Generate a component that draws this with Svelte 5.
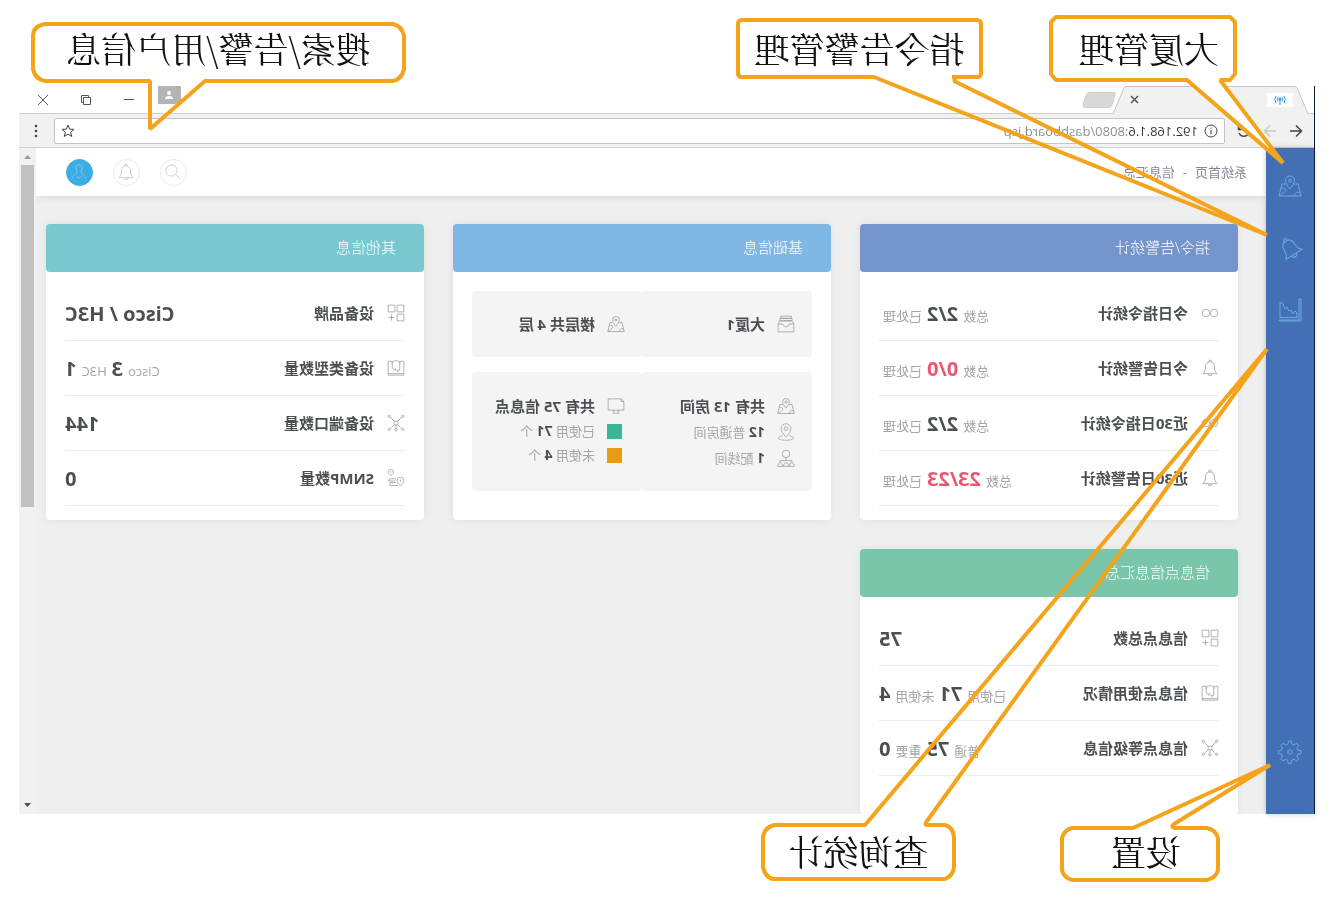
<script>
  const icons = {
    map: 'M12 15c-3.2-4-4.5-6.200-4.500-8.500a4.500 4.500 0 0 1 9 0C16.500 8.800 15.200 11 12 15zM12 5.200a1.400 1.400 0 1 0 0 2.800a1.400 1.400 0 1 0 0-2.800M7.500 10H4L1 22h22l-3-12h-3.500M1.800 19c3-1.500 5-1 6 3M21 14c-4-.5-6 1.500-4 3.500s4 2 4.500 4.500',
    bell: 'M2.500 19.500C5 17.500 6 15 6 10.500 6 6 8.500 4 12 4s6 2 6 6.500c0 4.500 1 7 3.500 9zM10.300 4V3a1.700 1.700 0 0 1 3.400 0v1M9.500 19.800a2.500 2.500 0 0 0 5 0',
    chart: 'M1 1h2v21h20v1H1zM5 20v-5l2-2 2 3 2-4 2 1 2-4 2 2 2-5 3-2v16M5 19.500h17',
    gear: 'M10.500 1h3l.5 3 2.500 1 2.500-1.800 2.100 2.100L19.500 8l1 2.300 3 .4v3l-3 .4-1 2.400 1.700 2.400-2.100 2.100-2.500-1.700-2.400 1-.4 3h-3l-.5-3-2.400-1L5.400 21l-2.200-2.100L5 16.500l-1-2.400-3-.4v-3l3-.4 1-2.400-1.700-2.500 2.100-2.100L7.900 5l2.300-1zM12 9.800a2.200 2.200 0 1 0 0 4.400a2.200 2.200 0 1 0 0-4.400',
    infinity: 'M6.500 7a5 5 0 1 0 0 10a5 5 0 1 0 0-10M17.500 7a5 5 0 1 0 0 10a5 5 0 1 0 0-10',
    grid: 'M1.500 1.500h9v9h-9zM13.500 1.500h9v9h-9zM1.500 13.500h9v9h-9zM18 14v8M14 18h8',
    device: 'M7 3H1.500v18.500h21V3H17M6.500 6c0-5 11-5 11 0M7 3v12h4l-2 3M17 3v9l-4 3v-3M1.500 19.500h21',
    network: 'M9.500 9.500h5v5h-5zM9.500 9.500L4 4M14.500 9.500L20 4M9.500 14.500l-5 5M14.500 14.500l5 5M12 14.500v5M3 1.500a1.500 1.500 0 1 0 0 3a1.500 1.500 0 1 0 0-3M21 1.500a1.500 1.500 0 1 0 0 3a1.500 1.500 0 1 0 0-3M3 19a1.500 1.500 0 1 0 0 3a1.500 1.500 0 1 0 0-3M21 19a1.500 1.500 0 1 0 0 3a1.500 1.500 0 1 0 0-3M12 19.500a1.500 1.500 0 1 0 0 3a1.500 1.500 0 1 0 0-3',
    route: 'M19 9c-2.500-2-3.500-3.500-3.500-5a3.500 3.500 0 0 1 7 0c0 1.500-1 3-3.500 5zM19 3v2M6 22c-3.500-2.500-4.500-4.500-4.500-6.500a4.500 4.500 0 0 1 9 0c0 2-1 4-4.500 6.500zM6 14v3M12 13h9l1 3h-9M12 18h8v4H9',
    archive: 'M5 1.500h14v3H5zM4 4.500h16v3H4zM3.500 8h17l2 4v10.500h-21V12zM1.500 12H8c.5 5 7.500 5 8 0h6.500',
    pin: 'M12 19c-4.500-5.500-6.500-8-6.500-11.500a6.500 6.500 0 0 1 13 0C18.500 11 16.500 13.500 12 19zM12 5a2.500 2.500 0 1 0 0 5a2.500 2.500 0 1 0 0-5M7.500 17C-2 19 1 23 12 23s14-4 4.500-6',
    people: 'M12 1.500a5 5 0 1 0 0 10a5 5 0 1 0 0-10M12 11.500v4M4 18v-2.500h16V18M1 23.500c0-7 6.500-7 6.500 0zM8.700 23.500c0-7 6.500-7 6.500 0zM16.500 23.500c0-7 6.500-7 6.500 0z',
    monitor: 'M5 2.500h17.500v15h-21V6zM1.500 6H5V2.500M9 17.500v3M15 17.500v3M7 21.500h10',
    search: 'M14 2.500a7.500 7.500 0 1 0 0 15a7.500 7.500 0 1 0 0-15M8.500 15.500L2.500 21.500',
    user: 'M12 2c-3 0-4 2-4 4.500 0 2 .5 3 1.500 4.500v2C8 15.500 3 16 2.500 21M12 2c3 0 4 2 4 4.500 0 2-.5 3-1.500 4.500v2c1.500 2.500 6.500 3 7 8M9 18l3 2 3-2'
  };

  const nav = [
    { icon: 'map', label: '大厦管理' },
    { icon: 'bell', label: '指令告警管理', tilt: true },
    { icon: 'chart', label: '查询统计' }
  ];

  const n = (v) => ({ v });
  const cards = [
    {
      title: '指令/告警统计', tone: 'indigo',
      rows: [
        { icon: 'infinity', label: '今日指令统计', parts: ['总数', n('2/2'), '已处理'] },
        { icon: 'bell', label: '今日告警统计', parts: ['总数', n('0/0'), '已处理'], alert: true },
        { icon: 'infinity', label: '近30日指令统计', parts: ['总数', n('2/2'), '已处理'] },
        { icon: 'bell', label: '近30日告警统计', parts: ['总数', n('23/23'), '已处理'], alert: true }
      ]
    },
    { title: '基础信息', tone: 'sky' },
    {
      title: '其他信息', tone: 'cyan',
      rows: [
        { icon: 'grid', label: '设备品牌', parts: [n('Cisco / H3C')] },
        { icon: 'device', label: '设备类型数量', parts: ['Cisco', n('3'), 'H3C', n('1')] },
        { icon: 'network', label: '设备端口数量', parts: [n('144')] },
        { icon: 'route', label: 'SNMP数量', parts: [n('0')] }
      ]
    },
    {
      title: '信息点信息汇总', tone: 'green',
      rows: [
        { icon: 'grid', label: '信息点总数', parts: [n('75')] },
        { icon: 'device', label: '信息点使用情况', parts: ['已使用', n('71'), '未使用', n('4')] },
        { icon: 'network', label: '信息点等级信息', parts: ['普通', n('75'), '重要', n('0')] }
      ]
    }
  ];

  const callouts = [
    { id: 'building', text: '大厦管理', solid: true,
      d: 'M7 2H181L186 7V59L181 65H50L-46 148L17 65H7L2 59V7Z' },
    { id: 'alarm', text: '指令告警管理',
      d: 'M6 2H241Q245 2 245 6V55Q245 59 241 59H109L-284 217L29 63Q26 59 31 59H6Q2 59 2 55V6Q2 2 6 2Z' },
    { id: 'search', text: '搜索/告警/用户信息',
      d: 'M13 2H361Q373 4 373 14V47Q371 57 361 59H256V107L201 59H13Q4 57 2 47V14Q4 4 13 2Z' },
    { id: 'query', text: '查询统计',
      d: 'M11 2H29Q32 2 29 -2L-311 -474L91 2H182Q192 5 193 14V44Q191 54 183 56H11Q3 53 2 44V14Q3 4 11 2Z' },
    { id: 'settings', text: '设置',
      d: 'M13 2H45Q50 1 46 -2L-50 -61L87 2H148Q156 4 158 12V44Q156 52 148 54H13Q4 52 2 44V12Q4 4 13 2Z' }
  ];
</script>

{#snippet icon(name, size = 18)}
  <svg class="icon" width={size} height={size} viewBox="0 0 24 24" aria-hidden="true"><path d={icons[name]} /></svg>
{/snippet}

<div class="page">
  <div class="browser">
    <div class="tabs">
      <div class="tab">
        <svg class="tab-shape" width="196" height="28" viewBox="0 0 196 28" aria-hidden="true">
          <path d="M0 28L11 2Q12 .5 14 .5H181Q183 .5 184 2L195 28" />
        </svg>
        <span class="favicon">
          <svg width="12" height="12" viewBox="0 0 12 12" aria-hidden="true"><path d="M6 5v6M4 3.500q-1.500 2 0 4M8 3.500q1.500 2 0 4M2 2q-2.500 3.500 0 7M10 2q2.500 3.500 0 7" /><circle cx="6" cy="5" r="1.500" /></svg>
        </span>
        <button class="close" aria-label="关闭标签页"><svg width="9" height="9" viewBox="0 0 9 9"><path d="M1 1l7 7M8 1L1 8" /></svg></button>
      </div>
      <button class="new-tab" aria-label="新标签页"><svg width="34" height="16" viewBox="0 0 34 16"><path d="M2 .5H27Q29 .5 30 3L33 13Q33 15.500 31 15.500H7Q5 15.500 4 13L1 3Q0 .5 2 .5Z" /></svg></button>
      <div class="window-buttons">
        <button class="profile" aria-label="用户"><svg width="10" height="10" viewBox="0 0 10 10"><circle cx="5" cy="3" r="2" /><path d="M1 9q0-3 4-3t4 3z" /></svg></button>
        <button aria-label="最小化"><svg width="12" height="12" viewBox="0 0 12 12"><path d="M1 5.500h10" /></svg></button>
        <button aria-label="还原"><svg width="12" height="12" viewBox="0 0 12 12"><path d="M1.500 3.500h7v7h-7zM3.500 3V1.500h7v7H9" /></svg></button>
        <button aria-label="关闭"><svg width="12" height="12" viewBox="0 0 12 12"><path d="M1 1l10 10M11 1L1 11" /></svg></button>
      </div>
    </div>

    <div class="toolbar">
      <button aria-label="后退"><svg width="14" height="14" viewBox="0 0 14 14"><path d="M13 7H2M7 1.500L1.500 7L7 12.500" /></svg></button>
      <button class="dim" aria-label="前进"><svg width="14" height="14" viewBox="0 0 14 14"><path d="M1 7h11M7 1.500L12.500 7L7 12.500" /></svg></button>
      <button aria-label="刷新"><svg width="14" height="14" viewBox="0 0 14 14"><path d="M12 5a5.300 5.300 0 1 0 0 4M12.500 1v4.500H8" /></svg></button>
      <div class="address">
        <svg width="14" height="14" viewBox="0 0 14 14" aria-hidden="true"><circle cx="7" cy="7" r="6" /><path d="M7 6v4.500M7 3.500v1.200" /></svg>
        <input aria-label="地址" value="192.168.1.6:8080/dashboard.jsp" />
        <button aria-label="收藏"><svg width="14" height="14" viewBox="0 0 14 14"><path d="M7 1l1.700 4.200 4.300.2-3.400 2.800 1.200 4.300L7 10.100l-3.800 2.400 1.200-4.300L1 5.400l4.300-.2z" /></svg></button>
      </div>
      <button class="menu" aria-label="菜单"><svg width="4" height="14" viewBox="0 0 4 14"><circle cx="2" cy="2" r="1.300" /><circle cx="2" cy="7" r="1.300" /><circle cx="2" cy="12" r="1.300" /></svg></button>
    </div>

    <div class="app">
      <nav class="sidebar">
        {#each nav as item}
          <button class:tilt={item.tilt} aria-label={item.label}>{@render icon(item.icon, 24)}</button>
        {/each}
        <button class="bottom" aria-label="设置">{@render icon('gear', 24)}</button>
      </nav>

      <div class="view">
        <header>
          <span class="crumbs">系统首页<i>-</i>信息汇总</span>
          <button aria-label="搜索">{@render icon('search', 18)}</button>
          <button aria-label="告警">{@render icon('bell', 18)}</button>
          <button class="me" aria-label="用户信息">{@render icon('user', 18)}</button>
        </header>

        <main>
          {#each cards as card}
            <section class="card">
              <h2 class={card.tone}>{card.title}</h2>
              {#if card.rows}
                <ul class="rows">
                  {#each card.rows as row}
                    <li class:alert={row.alert}>
                      {@render icon(row.icon)}
                      <strong>{row.label}</strong>
                      <span class="value">
                        {#each row.parts as part}
                          {#if part.v}<b>{part.v}</b>{:else}<small>{part}</small>{/if}
                        {/each}
                      </span>
                    </li>
                  {/each}
                </ul>
              {:else}
                <div class="panels">
                  <div class="panel">
                    <div class="cell"><p>{@render icon('archive')}<strong>大厦1</strong></p></div>
                    <div class="cell"><p>{@render icon('map')}<strong>楼层共 4 层</strong></p></div>
                  </div>
                  <div class="panel tall">
                    <div class="cell">
                      <p>{@render icon('map')}<strong>共有 13 房间</strong></p>
                      <p>{@render icon('pin')}<span><b>12</b> 普通房间</span></p>
                      <p>{@render icon('people')}<span><b>1</b> 配线间</span></p>
                    </div>
                    <div class="cell">
                      <p>{@render icon('monitor')}<strong>共有 75 信息点</strong></p>
                      <p class="legend"><span class="swatch used"></span><span>已使用 <b>71</b> 个</span></p>
                      <p class="legend"><span class="swatch free"></span><span>未使用 <b>4</b> 个</span></p>
                    </div>
                  </div>
                </div>
              {/if}
            </section>
          {/each}
        </main>
      </div>

      <div class="scrollbar">
        <svg width="7" height="4" viewBox="0 0 7 4" aria-hidden="true"><path class="up" d="M0 4L3.500 0L7 4z" /></svg>
        <span class="thumb"></span>
        <svg width="7" height="4" viewBox="0 0 7 4" aria-hidden="true"><path class="down" d="M0 0L3.500 4L7 0z" /></svg>
      </div>
    </div>
  </div>

  {#each callouts as c}
    <div class="callout {c.id}">
      <svg aria-hidden="true"><path class:solid={c.solid} d={c.d} /></svg>
      <span>{c.text}</span>
    </div>
  {/each}
</div>

<style>
  :global(body) { margin: 0; background: #fff; }
  * { box-sizing: border-box; }

  .page {
    position: relative;
    display: flex;
    height: 100vh;
    padding: 86px 19px 98px 18px;
    overflow: hidden;
    background: #fff;
    color: #4b4f54;
    font: 13px/20px "Open Sans", "Noto Sans CJK SC", sans-serif;
    transform: scaleX(-1);
  }
  button {
    display: flex;
    align-items: center;
    justify-content: center;
    margin: 0;
    padding: 0;
    border: 0;
    background: none;
    color: inherit;
  }
  svg { display: block; flex: none; }
  svg path, svg circle { fill: none; stroke: currentColor; }
  .icon { color: #97999c; }

  .browser {
    display: flex;
    flex: 1;
    flex-direction: column;
    min-width: 0;
    border-left: 1px solid #0d1c33;
  }
  .tabs { display: flex; height: 27px; padding-left: 6px; color: #555; }
  .tab {
    position: relative;
    display: flex;
    align-items: center;
    justify-content: space-between;
    width: 196px;
    padding: 0 18px 0 15px;
  }
  .tab-shape { position: absolute; inset: 0; }
  .tab-shape path { fill: #f1f1f1; stroke: #c6c6c6; }
  .favicon { position: relative; padding: 1px 7px; background: #fff; color: #2f9ddb; }
  .favicon circle { fill: currentColor; stroke: none; }
  .close { position: relative; color: #555; }
  .close path { stroke-width: 1.500; }
  .new-tab { margin-left: -4px; }
  .new-tab path { fill: #d9d9d9; stroke: #cfcfcf; }
  .window-buttons { display: flex; align-items: center; margin-left: auto; padding-right: 18px; gap: 31px; }
  .window-buttons .profile {
    align-self: flex-start;
    width: 23px;
    height: 18px;
    margin-right: -8px;
    background: #b4b4b4;
  }
  .profile path, .profile circle { fill: #fff; stroke: none; }

  .toolbar {
    display: flex;
    align-items: center;
    height: 35px;
    padding: 0 15px 0 11px;
    gap: 12px;
    border-top: 1px solid #cfcfcf;
    border-bottom: 1px solid #cfcfcf;
    background: #f1f1f1;
    color: #444;
  }
  .toolbar path { stroke-width: 1.500; }
  .toolbar .dim { color: #c9c9c9; }
  .address {
    display: flex;
    flex: 1;
    align-items: center;
    height: 26px;
    margin-right: 4px;
    padding: 0 6px;
    gap: 6px;
    border: 1px solid #c4c4c4;
    border-radius: 2px;
    background: #fff;
  }
  .address svg path, .address svg circle { stroke-width: 1; }
  .address input {
    flex: 1;
    min-width: 0;
    padding: 0;
    border: 0;
    outline: 0;
    background: linear-gradient(90deg, #333 70px, #888 70px);
    background-clip: text;
    color: transparent;
    font: 13px/20px "Open Sans", sans-serif;
  }
  .menu circle { fill: currentColor; stroke: none; }

  .app { display: flex; flex: 1; min-height: 0; background: #efefef; }
  .sidebar {
    z-index: 1;
    display: flex;
    flex-direction: column;
    align-items: center;
    width: 48px;
    padding: 26px 0 50px;
    gap: 38px;
    background: #436fb5;
    box-shadow: 0 0 6px #0003;
  }
  .sidebar .icon { color: #6dabdf; }
  .tilt .icon { transform: rotate(32deg); }
  .bottom { margin-top: auto; }

  .view { display: flex; flex: 1; flex-direction: column; min-width: 0; overflow: hidden; }
  header {
    display: flex;
    flex: none;
    align-items: center;
    height: 48px;
    padding: 0 30px 0 19px;
    gap: 20px;
    background: #fff;
    box-shadow: 0 2px 8px #00000014;
  }
  .crumbs { margin-right: auto; color: #858893; }
  .crumbs i { padding: 0 8px; font-style: normal; }
  header button { width: 27px; height: 27px; border: 1px solid #e8e8f0; border-radius: 50%; }
  header .icon { color: #bcbcd2; }
  header .me { border-color: #3bade3; background: #3bade3; }
  header .me .icon { color: #8bd2f3; }

  main {
    display: grid;
    flex: 1;
    grid-template-columns: repeat(3, minmax(0, 1fr));
    grid-template-rows: auto 1fr;
    padding: 28px 10px 0 28px;
    gap: 29px;
  }
  .card { border-radius: 4px; background: #fff; box-shadow: 0 0 8px #00000012; }
  h2 {
    height: 48px;
    margin: 0;
    padding: 0 28px;
    border-radius: 4px;
    color: #fff;
    font-size: 15px;
    font-weight: 300;
    line-height: 46px;
  }
  .indigo { background: #7594cc; }
  .sky { background: #81b7e4; }
  .cyan { background: #79c8cf; }
  .green { background: #7ac6aa; }

  .rows { margin: 0; padding: 14px 19px; list-style: none; }
  .rows li {
    display: flex;
    align-items: center;
    height: 55px;
    gap: 13px;
    border-bottom: 1px solid #ececec;
  }
  strong { font-size: 15px; font-weight: 700; }
  .value { display: flex; align-items: baseline; margin-left: auto; padding-top: 2px; gap: 5px; }
  .value b { font-size: 20px; font-weight: 700; line-height: 28px; }
  small { color: #a3a5a8; font-size: 13px; }
  small:last-child { padding-right: 4px; }
  .alert b { color: #ea5672; }

  .panels { display: grid; padding: 19px; gap: 15px; align-content: start; }
  .panel { display: grid; grid-template-columns: 1fr 1fr; }
  .cell { padding: 20px 17px; border-radius: 4px; background: #f4f4f4; }
  .tall .cell { padding: 21px 17px 20px; }
  .cell p { display: flex; align-items: center; height: 26px; margin: 0; gap: 12px; color: #a3a5a8; }
  .cell .legend { height: 24px; }
  .cell strong, .cell b { color: #4b4f54; }
  .cell b { font-size: 14px; }
  .swatch { width: 15px; height: 15px; margin-left: 3px; }
  .used { background: #3bb59a; }
  .free { background: #e59e14; }

  .scrollbar {
    display: flex;
    flex-direction: column;
    align-items: center;
    width: 17px;
    padding: 7px 0;
    background: #f1f1f1;
  }
  .scrollbar path { stroke: none; }
  .scrollbar .up { fill: #999; }
  .scrollbar .down { fill: #505050; }
  .thumb { width: 13px; height: 342px; margin: 6px 0 auto; background: #c1c1bf; }

  .callout {
    position: absolute;
    z-index: 2;
    display: flex;
    align-items: center;
    justify-content: center;
    color: #111;
    font: 400 35px/48px "Noto Serif CJK SC", "Noto Sans CJK SC", serif;
    white-space: nowrap;
    pointer-events: none;
  }
  .callout svg { position: absolute; inset: 0; overflow: visible; }
  .callout path { stroke: #f3a41b; stroke-width: 4px; stroke-linejoin: bevel; }
  .callout .solid { fill: #fff; }
  .callout span { position: relative; }
  .building { top: 15px; left: 96px; width: 188px; height: 66px; padding-right: 12px; }
  .alarm { top: 18px; left: 350px; width: 247px; height: 60px; }
  .search { top: 22px; right: 31px; width: 375px; height: 52px; }
  .query { top: 823px; left: 377px; width: 195px; height: 56px; }
  .settings { top: 826px; left: 113px; width: 160px; height: 50px; padding-right: 12px; }
</style>
